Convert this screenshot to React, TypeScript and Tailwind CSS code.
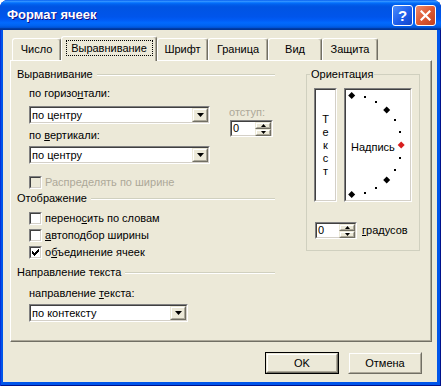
import React from 'react';

const SUNKEN_OUT = 'border border-t-[#808080] border-l-[#808080] border-r-white border-b-white';
const SUNKEN_IN = 'border border-t-[#404040] border-l-[#404040] border-r-[#D4D0C8] border-b-[#D4D0C8]';
const RAISED_OUT = 'border border-t-[#ECE9D8] border-l-[#ECE9D8] border-r-[#716F64] border-b-[#716F64]';
const RAISED_IN = 'border border-t-white border-l-white border-r-[#ACA899] border-b-[#ACA899]';

function TitleBar() {
  return (
    <div className="h-[30px] flex items-center pl-[7px] pr-[5px] bg-[linear-gradient(to_bottom,#0058EE_0%,#3593FF_4%,#288EFF_6%,#127DFF_8%,#036FFC_10%,#0262EE_14%,#0057E5_20%,#0054E3_24%,#0055EB_56%,#005BF5_66%,#026AFE_76%,#0062EF_86%,#0052D6_92%,#0040AB_94%,#003092_100%)]">
      <span className="flex-1 text-white font-bold text-[13px] leading-[16px] [text-shadow:1px_1px_#0F1089]">
        Формат ячеек
      </span>
      <div className="flex gap-[2px]">
        <div className="w-[21px] h-[21px] rounded-[3px] border border-white bg-[linear-gradient(135deg,#4C8DFB_0%,#1E5EEB_55%,#1245C9_100%)] flex items-center justify-center">
          <span className="text-white font-bold text-[15px] leading-[15px]">?</span>
        </div>
        <div className="w-[21px] h-[21px] rounded-[3px] border border-white bg-[linear-gradient(135deg,#EE8A6C_0%,#DE5A33_50%,#C2401D_100%)] flex items-center justify-center">
          <svg width="11" height="11" viewBox="0 0 11 11">
            <path d="M1.5 1.5 L9.5 9.5 M9.5 1.5 L1.5 9.5" stroke="white" strokeWidth="2.2" strokeLinecap="square" />
          </svg>
        </div>
      </div>
    </div>
  );
}

function Tab({ label, width, active }: { label: string; width: string; active?: boolean }) {
  if (active) {
    return (
      <div className={`${width} h-[25px] bg-[#ECE9D8] border-l border-t border-l-white border-t-white border-r border-r-[#716F64] rounded-t-[3px] shadow-[inset_-1px_0_0_#ACA899] flex items-start justify-center pt-[3px]`}>
        <span className="w-[87px] h-[16px] border border-dotted border-black flex items-center justify-center leading-[13px]">
          {label}
        </span>
      </div>
    );
  }
  return (
    <div className={`${width} h-[22px] mb-[1px] bg-[#ECE9D8] border-l border-t border-l-white border-t-white border-r border-r-[#716F64] rounded-t-[3px] shadow-[inset_-1px_0_0_#ACA899] flex items-center justify-center`}>
      <span className="leading-[13px]">{label}</span>
    </div>
  );
}

function GroupHeader({ label }: { label: string }) {
  return (
    <div className="h-[13px] flex items-center">
      <span className="leading-[13px]">{label}</span>
      <div className="flex-1 ml-[4px] border-t border-t-[#D0D0BF] border-b border-b-white" />
    </div>
  );
}

function DownArrow() {
  return (
    <svg width="7" height="4" viewBox="0 0 7 4">
      <path d="M0 0h7l-3.5 4z" fill="black" />
    </svg>
  );
}

function Combo({ value, width, className = '' }: { value: string; width: string; className?: string }) {
  return (
    <div className={`${width} h-[18px] flex ${SUNKEN_OUT} ${className}`}>
      <div className={`flex-1 flex bg-white ${SUNKEN_IN}`}>
        <span className="flex-1 pl-[1px] leading-[14px]">{value}</span>
        <div className={`w-[16px] flex ${RAISED_OUT}`}>
          <div className={`flex-1 flex items-center justify-center bg-[#ECE9D8] ${RAISED_IN}`}>
            <DownArrow />
          </div>
        </div>
      </div>
    </div>
  );
}

function SpinHalf({ up }: { up?: boolean }) {
  return (
    <div className={`flex-1 flex ${RAISED_OUT}`}>
      <div className={`flex-1 flex items-center justify-center bg-[#ECE9D8] ${RAISED_IN}`}>
        <svg width="5" height="3" viewBox="0 0 5 3">
          <path d={up ? 'M0 3h5L2.5 0z' : 'M0 0h5L2.5 3z'} fill="black" />
        </svg>
      </div>
    </div>
  );
}

function Spin({ width, className = '' }: { width: string; className?: string }) {
  return (
    <div className={`${width} h-[17px] flex ${SUNKEN_OUT} ${className}`}>
      <div className={`flex-1 flex bg-white ${SUNKEN_IN}`}>
        <span className="flex-1 pl-[1px] leading-[13px]">0</span>
        <div className="w-[16px] flex flex-col">
          <SpinHalf up />
          <SpinHalf />
        </div>
      </div>
    </div>
  );
}

function Checkbox({ checked, disabled }: { checked?: boolean; disabled?: boolean }) {
  return (
    <span className={`w-[13px] h-[13px] flex ${SUNKEN_OUT}`}>
      <span className={`flex-1 flex items-center justify-center ${SUNKEN_IN} ${disabled ? 'bg-[#ECE9D8]' : 'bg-white'}`}>
        {checked && (
          <svg width="7" height="7" viewBox="0 0 7 7" shapeRendering="crispEdges">
            <path d="M0 2h1v1h1v1h1v-1h1v-1h1v-1h1v-1h1v3h-1v1h-1v1h-1v1h-1v1h-1v-1h-1v-1h-1z" fill="black" />
          </svg>
        )}
      </span>
    </span>
  );
}

function CheckRow({ children, checked, disabled }: { children: React.ReactNode; checked?: boolean; disabled?: boolean }) {
  return (
    <div className="h-[17px] flex items-center pl-[12px]">
      <Checkbox checked={checked} disabled={disabled} />
      <span className={`ml-[3px] leading-[13px] ${disabled ? 'text-[#ACA899]' : ''}`}>{children}</span>
    </div>
  );
}

function Dial() {
  const cx = 5.7;
  const cy = 55;
  const r = 49.5;
  const marks = [90, 75, 60, 45, 30, 15, 0, -15, -30, -45, -60, -75, -90];
  return (
    <svg className="absolute inset-0" width="64" height="110" viewBox="0 0 64 110">
      {marks.map((a) => {
        const rad = (a * Math.PI) / 180;
        const x = cx + r * Math.cos(rad);
        const y = cy - r * Math.sin(rad);
        if (a % 45 === 0) {
          const fill = a === 0 ? '#D81E1E' : 'black';
          return (
            <path
              key={a}
              d={`M${x} ${y - 3.5}L${x + 3.5} ${y}L${x} ${y + 3.5}L${x - 3.5} ${y}Z`}
              fill={fill}
            />
          );
        }
        return <rect key={a} x={Math.round(x) - 1} y={Math.round(y) - 1} width="2" height="2" fill="black" />;
      })}
    </svg>
  );
}

function Orientation() {
  return (
    <fieldset className="ml-[31px] w-[114px] h-[183px] border border-[#D0D0BF] px-[7px] m-0 min-w-0">
      <legend className="ml-[-4px] px-[1px] leading-[13px]">Ориентация</legend>
      <div className="flex mt-[7px]">
        <div className={`w-[23px] h-[114px] flex ${SUNKEN_OUT}`}>
          <div className={`flex-1 bg-white flex flex-col items-center justify-center leading-[13px] ${SUNKEN_IN}`}>
            <span>Т</span>
            <span>е</span>
            <span>к</span>
            <span>с</span>
            <span>т</span>
          </div>
        </div>
        <div className={`ml-[7px] w-[68px] h-[114px] flex ${SUNKEN_OUT}`}>
          <div className={`flex-1 relative bg-white flex items-center pl-[5px] pt-[4px] ${SUNKEN_IN}`}>
            <Dial />
            <span className="relative leading-[13px]">Надпись</span>
          </div>
        </div>
      </div>
      <div className="flex items-center mt-[20px] ml-[1px]">
        <Spin width="w-[42px]" />
        <span className="ml-[5px] leading-[13px]">
          <u>г</u>радусов
        </span>
      </div>
    </fieldset>
  );
}

function Panel() {
  return (
    <div className="ml-[7px] w-[422px] h-[282px] border-l border-t border-l-white border-t-white border-r border-b border-r-[#716F64] border-b-[#716F64] shadow-[inset_-1px_-1px_0_#ACA899] flex pl-[6px] pt-[7px]">
      <div className="w-[258px] flex flex-col">
        <GroupHeader label="Выравнивание" />
        <div className="flex">
          <div className="w-[193px] pl-[12px] flex flex-col">
            <span className="mt-[6px] leading-[13px]">
              по горизо<u>н</u>тали:
            </span>
            <Combo value="по центру" width="w-[181px]" className="mt-[6px]" />
            <span className="mt-[5px] leading-[13px]">
              по <u>в</u>ертикали:
            </span>
            <Combo value="по центру" width="w-[181px]" className="mt-[4px]" />
          </div>
          <div className="ml-[19px] flex flex-col">
            <span className="mt-[25px] leading-[13px] text-[#ACA899]">отступ:</span>
            <Spin width="w-[43px]" className="mt-[1px] ml-[1px]" />
          </div>
        </div>
        <div className="mt-[10px]">
          <CheckRow disabled>Распределять по ширине</CheckRow>
        </div>
        <div className="mt-[1px]">
          <GroupHeader label="Отображение" />
        </div>
        <div className="mt-[5px] flex flex-col">
          <CheckRow>
            перено<u>с</u>ить по словам
          </CheckRow>
          <CheckRow>
            <u>а</u>втоподбор ширины
          </CheckRow>
          <CheckRow checked>
            о<u>б</u>ъединение ячеек
          </CheckRow>
        </div>
        <div className="mt-[5px]">
          <GroupHeader label="Направление текста" />
        </div>
        <div className="pl-[12px] flex flex-col">
          <span className="mt-[8px] leading-[13px]">
            направление <u>т</u>екста:
          </span>
          <Combo value="по контексту" width="w-[159px]" className="mt-[4px]" />
        </div>
      </div>
      <Orientation />
    </div>
  );
}

function Button({ label, isDefault }: { label: string; isDefault?: boolean }) {
  return (
    <div className={`w-[74px] h-[22px] flex ${isDefault ? 'border border-black' : ''}`}>
      <div className={`flex-1 flex ${RAISED_OUT}`}>
        <div className={`flex-1 flex items-center justify-center bg-[#ECE9D8] ${RAISED_IN}`}>
          <span className="leading-[13px]">{label}</span>
        </div>
      </div>
    </div>
  );
}

export default function App() {
  return (
    <div className="w-[441px] h-[386px] bg-white">
      <div className="w-[441px] h-[386px] flex flex-col rounded-t-[8px] overflow-hidden bg-[#0055EA] shadow-[inset_1px_0_0_#0831D9,inset_-1px_-1px_0_#00138C] font-['Liberation_Sans',Arial,sans-serif] text-[11px] text-black">
        <TitleBar />
        <div className="flex-1 ml-[3px] mr-[4px] mb-[4px] bg-[#ECE9D8] flex flex-col pt-[6px]">
          <div className="ml-[9px] h-[25px] -mb-[1px] relative z-10 flex items-end">
            <Tab label="Число" width="w-[49px]" />
            <Tab label="Выравнивание" width="w-[96px]" active />
            <Tab label="Шрифт" width="w-[51px]" />
            <Tab label="Граница" width="w-[60px]" />
            <Tab label="Вид" width="w-[54px]" />
            <Tab label="Защита" width="w-[56px]" />
          </div>
          <Panel />
          <div className="mt-[10px] pr-[15px] flex justify-end gap-[9px]">
            <Button label="OK" isDefault />
            <Button label="Отмена" />
          </div>
        </div>
      </div>
    </div>
  );
}
